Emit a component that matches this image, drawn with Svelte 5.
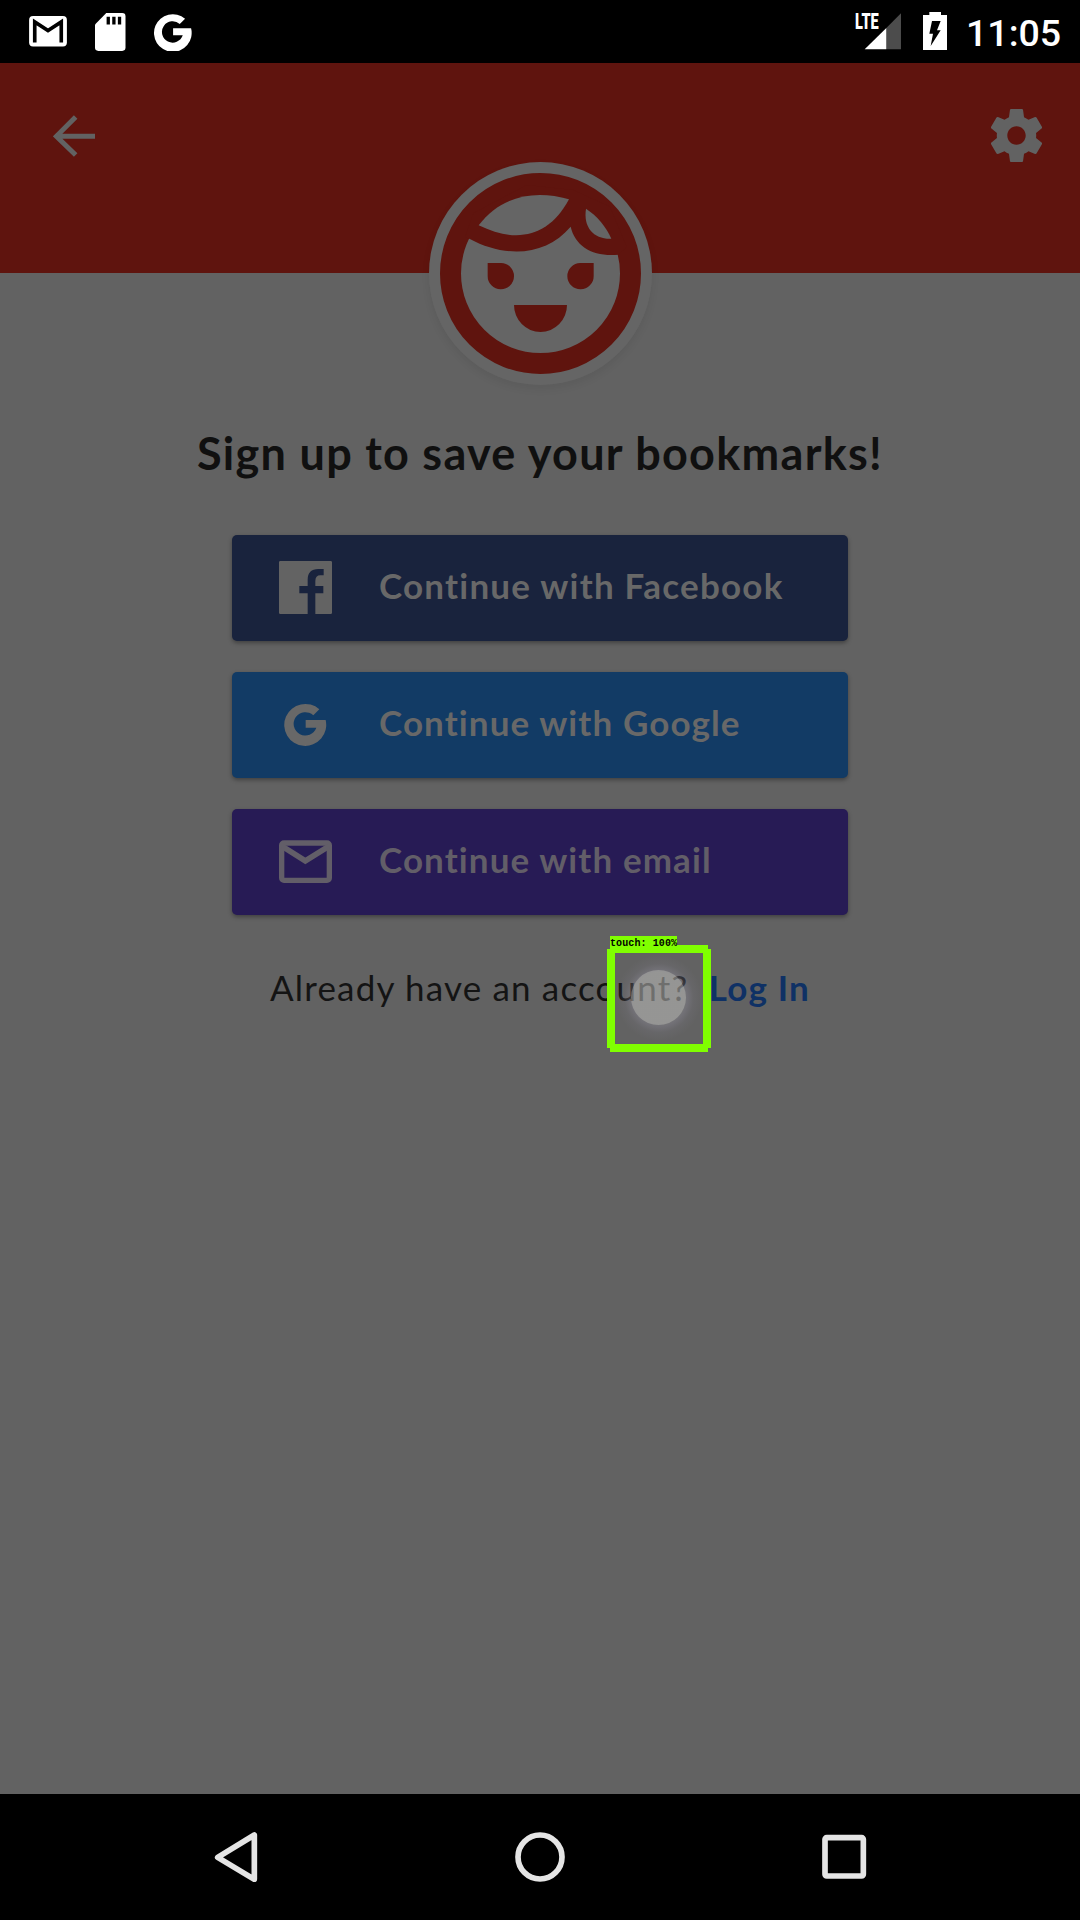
<script>
  const providers = [
    { id: 'facebook', label: 'Continue with Facebook' },
    { id: 'google', label: 'Continue with Google' },
    { id: 'email', label: 'Continue with email' }
  ];
</script>

<div class="screen">
  <div class="status">
    <svg class="gmail" viewBox="0 0 114 92">
      <rect width="114" height="92" rx="12" fill="#fff" />
      <path d="M17 80V18L57 44L97 18V80" fill="none" stroke="#000" stroke-width="11" />
    </svg>
    <svg class="sd" viewBox="0 0 92 114">
      <path d="M34 0H82Q92 0 92 10V104Q92 114 82 114H10Q0 114 0 104V34Z" fill="#fff" />
      <path d="M35 11h10v23h-10zM52 11h10v23h-10zM69 11h10v23h-10z" />
    </svg>
    <svg class="gicon" viewBox="0 0 112 114" fill="#fff">
      <path d="M93 17A56.500 56.500 0 1 0 111 46H57V67H86A32 32 0 1 1 77 33Z" />
    </svg>
    <div class="signal">
      <span class="lte">LTE</span>
      <svg viewBox="0 0 138 112">
        <path d="M138 1V109H94V45Z" fill="#4c4c4c" />
        <path d="M94 45V109H29Z" fill="#fff" />
      </svg>
    </div>
    <svg class="battery" viewBox="0 0 72 114">
      <path d="M19 0H54V9H72V114H0V9H19Z" fill="#fff" />
      <path d="M27 27H53L42 55H53L23 102L30 65H19Z" />
    </svg>
    <span class="clock">11:05</span>
  </div>

  <header>
    <svg class="back" viewBox="0 0 126 126">
      <path d="M68 6L10 64L68 120M11 64H126" fill="none" stroke="#626262" stroke-width="15" />
    </svg>
    <svg class="gear" viewBox="2.300 2 19.400 20" preserveAspectRatio="none">
      <path fill="#626262" d="M19.430 12.980c.04-.32.07-.64.07-.98s-.03-.66-.07-.98l2.110-1.650c.19-.15.24-.42.12-.64l-2-3.460c-.12-.22-.39-.3-.61-.22l-2.490 1c-.52-.4-1.080-.73-1.690-.98l-.38-2.650C14.460 2.180 14.250 2 14 2h-4c-.25 0-.46.18-.49.42l-.38 2.650c-.61.25-1.170.59-1.690.98l-2.490-1c-.23-.09-.49 0-.61.22l-2 3.460c-.13.22-.07.49.12.64l2.110 1.650c-.04.32-.07.65-.07.98s.03.66.07.98l-2.110 1.650c-.19.15-.24.42-.12.64l2 3.460c.12.22.39.3.61.22l2.490-1c.52.4 1.080.73 1.690.98l.38 2.650c.03.24.24.42.49.42h4c.25 0 .46-.18.49-.42l.38-2.650c.61-.25 1.170-.59 1.690-.98l2.490 1c.23.09.49 0 .61-.22l2-3.460c.12-.22.07-.49-.12-.64l-2.110-1.650zM12 15.500c-1.930 0-3.500-1.570-3.500-3.500s1.570-3.500 3.500-3.500 3.500 1.570 3.500 3.500-1.570 3.500-3.500 3.500z" />
    </svg>
  </header>

  <main>
    <div class="avatar">
      <svg viewBox="57 36 669 669">
        <circle cx="391.500" cy="370.500" r="334.500" fill="#656565" />
        <circle cx="391.500" cy="370.500" r="270" fill="none" stroke="#5f140e" stroke-width="63" />
        <path fill="#5f140e" d="M165 262L178 266C290 326 408 317 482 230C496 290 550 321 625 314L650 290L600 170L490 120L350 105L190 190Z" />
        <path fill="#656565" d="M206 226C272 139 372 118 477 148C416 262 318 281 206 226Z" />
        <path fill="#656565" d="M528 176C562 198 588 230 604 266C552 268 519 233 528 176Z" />
        <path fill="#5f140e" d="M233 339H273A39.500 39.500 0 1 1 233 378Z M551 339H511A39.500 39.500 0 1 0 551 378Z M312 465H471A79.500 81 0 0 1 312 465Z" />
      </svg>
    </div>

    <h1>Sign up to save your bookmarks!</h1>

    <div class="buttons">
      {#each providers as p}
        <button class={p.id}>
          {#if p.id === 'facebook'}
            <svg viewBox="0 0 159 159">
              <path fill="#636363" d="M4 0H155Q159 0 159 4V155Q159 159 155 159H109V97H133V75H109V60Q109 43 124 43H134V24H118Q86 24 86 56V75H61V97H86V159H4Q0 159 0 155V4Q0 0 4 0Z" />
            </svg>
          {:else if p.id === 'google'}
            <svg viewBox="-17 -15 159 159" fill="#686868">
              <path d="M104 19A63 63 0 1 0 123 51H63V74H95A35 35 0 1 1 86 37Z" />
            </svg>
          {:else}
            <svg viewBox="0 0 159 159">
              <rect x="8" y="24" width="143" height="112" rx="7" fill="none" stroke="#625e68" stroke-width="16" />
              <path d="M10 34L79 78L149 34" fill="none" stroke="#625e68" stroke-width="17" />
            </svg>
          {/if}
          <span>{p.label}</span>
        </button>
      {/each}
    </div>

    <p class="login"><span>Already have an account?</span><a href="#login">Log In</a></p>
  </main>

  <nav>
    <svg viewBox="0 0 150 150"><path d="M20 76L130 9V142Z" /></svg>
    <svg viewBox="0 0 150 150"><circle cx="75" cy="75" r="66" /></svg>
    <svg viewBox="0 0 150 150"><rect x="18" y="17" width="115" height="115" rx="5" /></svg>
  </nav>

  <div class="touch">
    <div class="glow"></div>
    <div class="dot"></div>
    <svg viewBox="0 0 104 107" fill="#80ff00">
      <path d="M3 0H101V4H104V103H101V107H3V103H0V4H3ZM8 8V99H96V8Z" fill-rule="evenodd" />
    </svg>
    <span class="tag">touch: 100%</span>
  </div>
</div>

<style>
  :global(body) { margin: 0; background: #000; }
  .screen { position: relative; width: 1080px; height: 1920px; display: flex; flex-direction: column; background: #626262; font-family: Lato, "Open Sans", sans-serif; overflow: hidden; }
  svg { display: block; flex: none; }
  .status { height: 63px; background: #000; display: flex; align-items: flex-start; box-sizing: border-box; padding: 13px 22px 0 28.500px; }
  .gmail { width: 38px; height: 30.500px; margin-top: 3px; }
  .sd { width: 30.500px; height: 38px; margin-left: 28.500px; margin-top: -.5px; }
  .gicon { width: 37.500px; height: 38px; margin-left: 28.500px; margin-top: -.5px; }
  .signal { position: relative; margin-left: auto; width: 46px; height: 37px; }
  .signal svg { width: 46px; height: 37.300px; }
  .lte { position: absolute; left: 0; top: 0; color: #fff; font: 900 22px/18px Roboto, sans-serif; transform: scaleX(.66); transform-origin: 0 0; }
  .battery { width: 24px; height: 38px; margin: -1px 0 0 22px; }
  .clock { width: 92px; margin-left: 19px; color: #fff; font: 500 37.500px/41px Roboto, sans-serif; white-space: nowrap; }
  header { height: 210px; flex: none; background: #5f140e; display: flex; justify-content: space-between; align-items: flex-start; box-sizing: border-box; padding: 46px 38px 0 53px; }
  .back { width: 42px; height: 42px; margin-top: 6px; }
  .gear { width: 51px; height: 53px; }
  main { flex: 1; display: flex; flex-direction: column; align-items: center; }
  .avatar { width: 223px; height: 223px; margin-top: -111px; border-radius: 50%; box-shadow: 0 4px 8px rgba(0, 0, 0, .07); }
  .avatar svg { width: 223px; height: 223px; }
  h1 { margin: 40px 0 0; font-size: 45px; line-height: 56px; font-weight: 700; letter-spacing: 1.280px; color: #101010; white-space: nowrap; }
  .buttons { margin-top: 54px; display: flex; flex-direction: column; gap: 31px; }
  button { width: 616px; height: 106px; border: 0; border-radius: 5px; padding: 0 0 1px 47px; display: flex; align-items: center; gap: 47px; font: 700 35px/44px Lato, sans-serif; letter-spacing: 1.100px; color: #686868; box-shadow: 0 2px 4px rgba(0, 0, 0, .35); }
  button svg { width: 53px; height: 53px; }
  button span { white-space: nowrap; padding-bottom: 5px; }
  .facebook { background: #19233d; letter-spacing: 1.220px; }
  .google { background: #123b65; }
  .email { background: #271b55; color: #625e68; }
  .login { margin: 50px 0 0; width: 540px; display: flex; justify-content: space-between; font-size: 35px; line-height: 44px; letter-spacing: 1.180px; color: #141414; white-space: nowrap; }
  .login a { color: #0f3165; font-weight: 700; text-decoration: none; }
  nav { height: 126px; flex: none; background: #000; display: grid; grid-template-columns: repeat(3, 50px); column-gap: 254px; justify-content: center; align-items: center; }
  nav svg { width: 50px; height: 50px; fill: none; stroke: #e5e5e5; stroke-width: 17; stroke-linejoin: round; }
  .touch { position: absolute; left: 607px; top: 945px; width: 104px; height: 107px; }
  .touch svg { position: absolute; left: 0; top: 0; width: 104px; height: 107px; }
  .glow { position: absolute; left: 9px; top: 10px; width: 86px; height: 86px; border-radius: 50%; background: radial-gradient(circle closest-side, rgba(190, 190, 195, .22) 60%, rgba(150, 146, 165, .3) 66%, rgba(125, 122, 135, .18) 80%, rgba(110, 110, 115, 0) 100%); }
  .dot { position: absolute; left: 24px; top: 25px; width: 55px; height: 55px; border-radius: 50%; background: rgba(205, 205, 200, .36); }
  .tag { position: absolute; left: 3px; top: -9px; width: 67px; height: 11px; background: #80ff00; color: #000; font: 700 10px/15px "Liberation Mono", monospace; letter-spacing: .1px; white-space: nowrap; }
</style>
